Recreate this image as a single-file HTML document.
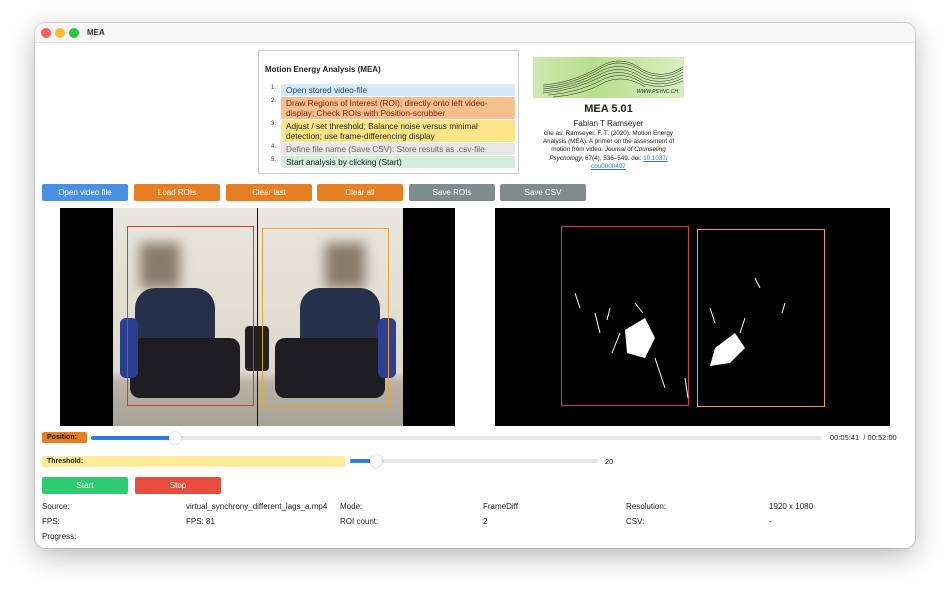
<!DOCTYPE html>
<html><head><meta charset="utf-8"><style>
*{margin:0;padding:0;box-sizing:border-box}
body{width:950px;height:594px;background:#fff;font-family:"Liberation Sans",sans-serif;position:relative;overflow:hidden}
.win{position:absolute;left:35px;top:23px;width:880px;height:525px;background:#fff;border-radius:10px;box-shadow:0 8px 28px rgba(0,0,0,.28),0 0 0 1px rgba(0,0,0,.12);overflow:hidden}
.tb{height:20px;background:#f6f6f6;border-bottom:1px solid #e2e2e2;position:relative}
.dot{position:absolute;top:5px;width:10px;height:10px;border-radius:50%}
.ab{position:absolute}
.btn{position:absolute;height:17px;color:#fff;font-size:8px;text-align:center;line-height:17px;border-radius:2px}
.t{position:absolute;font-size:8px;color:#222;white-space:nowrap}
.step{position:absolute;left:22px;width:234px;font-size:8.3px;padding:1px 5px;border-radius:2px;line-height:10px}
.num{position:absolute;left:12px;font-size:6px;color:#333}
</style></head><body>
<div class="win">
<div class="tb"><div class="dot" style="left:6px;background:#fe5f57"></div><div class="dot" style="left:20px;background:#febc2e"></div><div class="dot" style="left:34px;background:#28c840"></div><span style="position:absolute;left:52px;top:5px;font-size:8px;font-weight:bold;color:#333">MEA</span></div>

<div class="ab" style="left:223px;top:27px;width:261px;height:124px;border:1px solid #ccc;background:#fff">
<div class="t" style="left:6px;top:14px;font-weight:bold;font-size:8px">Motion Energy Analysis (MEA)</div>
<div class="num" style="top:34px">1.</div><div class="step" style="top:33px;background:#d6e9f8;color:#134a85">Open stored video-file</div>
<div class="num" style="top:47px">2.</div><div class="step" style="top:46px;background:#f6c08e;color:#7a2008">Draw Regions of Interest (ROI); directly onto left video-display; Check ROIs with Position-scrubber</div>
<div class="num" style="top:70px">3.</div><div class="step" style="top:69px;background:#fde68a;color:#222">Adjust / set threshold; Balance noise versus minimal detection; use frame-differencing display</div>
<div class="num" style="top:93px">4.</div><div class="step" style="top:92px;background:#e8e8e8;color:#666">Define file name (Save CSV): Store results as .csv-file</div>
<div class="num" style="top:106px">5.</div><div class="step" style="top:105px;background:#d3eedc;color:#111">Start analysis by clicking (Start)</div>
</div>

<div class="ab" style="left:498px;top:34px;width:151px;height:41px;background:linear-gradient(90deg,#cfe8b0,#b6de8c 40%,#d9efc0);overflow:hidden">
<svg width="151" height="41" style="position:absolute;left:0;top:0"><g fill="none" stroke="#222" stroke-width=".5">
<path d="M10 28 Q40 26 70 8 Q90 -2 110 13 Q130 23 150 10"/><path d="M10 30 Q40 28 70 10 Q90 0 110 15 Q130 25 150 12"/><path d="M10 32 Q40 30 70 13 Q90 4 110 18 Q130 27 150 15"/><path d="M10 34 Q40 32 70 16 Q90 7 110 21 Q130 29 150 18"/><path d="M10 36 Q40 34 70 19 Q90 10 110 24 Q130 31 150 21"/><path d="M15 38 Q45 36 71 22 Q91 13 111 27 Q130 33 150 24"/><path d="M20 40 Q50 38 72 25 Q92 17 112 30"/></g></svg>
<div style="position:absolute;right:6px;bottom:3px;font-size:5px;font-style:italic;color:#222">WWW.PSYNC.CH</div></div>
<div class="t" style="left:498px;top:80px;width:151px;text-align:center;font-weight:bold;font-size:11px">MEA 5.01</div>
<div class="t" style="left:498px;top:96px;width:151px;text-align:center;font-size:8px">Fabian T Ramseyer</div>
<div class="ab" style="left:499px;top:107px;width:149px;text-align:center;font-size:6.3px;line-height:8.2px;color:#222">cite as: Ramseyer, F. T. (2020). Motion Energy Analysis (MEA). A primer on the assessment of motion from video. <i>Journal of Counseling Psychology</i>, 67(4), 536–549. doi: <span style="color:#2a6fd6;text-decoration:underline">10.1037/ cou0000407</span></div>

<div class="btn" style="left:7px;top:161px;width:86px;background:#4a90e2">Open video file</div>
<div class="btn" style="left:99px;top:161px;width:86px;background:#e67e22">Load ROIs</div>
<div class="btn" style="left:191px;top:161px;width:86px;background:#e67e22">Clear last</div>
<div class="btn" style="left:282px;top:161px;width:86px;background:#e67e22">Clear all</div>
<div class="btn" style="left:374px;top:161px;width:86px;background:#7f8c8d">Save ROIs</div>
<div class="btn" style="left:465px;top:161px;width:86px;background:#7f8c8d">Save CSV</div>

<div class="ab" style="left:25px;top:185px;width:395px;height:218px;background:#000;overflow:hidden">
<div class="ab" style="left:53px;top:0;width:290px;height:218px;background:linear-gradient(180deg,#e9e6df,#ddd8cc 75%,#b9b2a5 80%,#a9a296)"></div>
<div class="ab" style="left:197px;top:0;width:1px;height:218px;background:#111"></div>
<div class="ab" style="left:185px;top:118px;width:24px;height:45px;background:#222;border-radius:4px"></div>
<div class="ab" style="left:80px;top:35px;width:40px;height:45px;background:#8a7a6a;filter:blur(6px)"></div>
<div class="ab" style="left:265px;top:35px;width:40px;height:45px;background:#8a7a6a;filter:blur(6px)"></div>
<div class="ab" style="left:75px;top:80px;width:80px;height:70px;background:#27304a;border-radius:20px 20px 8px 8px"></div>
<div class="ab" style="left:240px;top:80px;width:80px;height:70px;background:#27304a;border-radius:20px 20px 8px 8px"></div>
<div class="ab" style="left:70px;top:130px;width:110px;height:60px;background:#1d1d22;border-radius:10px"></div>
<div class="ab" style="left:215px;top:130px;width:110px;height:60px;background:#1d1d22;border-radius:10px"></div>
<div class="ab" style="left:60px;top:110px;width:18px;height:60px;background:#2d3f8f;border-radius:6px"></div>
<div class="ab" style="left:318px;top:110px;width:18px;height:60px;background:#2d3f8f;border-radius:6px"></div>
<div class="ab" style="left:67px;top:18px;width:127px;height:180px;border:1.5px solid #d9383a"></div>
<div class="ab" style="left:202px;top:20px;width:127px;height:179px;border:1.5px solid #e8a33a"></div>
</div>

<div class="ab" style="left:460px;top:185px;width:395px;height:218px;background:#000">
<div class="ab" style="left:66px;top:18px;width:128px;height:180px;border:1.5px solid #d9383a"></div>
<div class="ab" style="left:202px;top:21px;width:128px;height:178px;border:1.5px solid #e8a33a"></div>
<svg width="395" height="218" style="position:absolute;left:0;top:0"><g fill="#fff">
<path d="M130 122 L150 110 L160 130 L150 150 L132 145 Z"/><path d="M220 140 L240 125 L250 140 L235 155 L215 158 Z"/>
</g><g stroke="#fff" stroke-width="1" fill="none"><path d="M80 85 l5 15 M100 105 l5 20 M115 100 l-3 12 M160 150 l10 30 M190 170 l3 20 M260 70 l5 10 M290 95 l-3 10 M250 110 l-5 15 M215 100 l5 15 M140 95 l8 10 M125 125 l-8 20"/></g></svg>
</div>

<div class="ab" style="left:7px;top:409px;width:45px;height:11px;background:#e67e22;border-radius:2px;font-size:7px;font-weight:bold;line-height:11px;padding-left:5px;color:#222">Position:</div>
<div class="ab" style="left:56px;top:413px;width:731px;height:4px;background:#e6e6e6;border-radius:2px"></div>
<div class="ab" style="left:56px;top:413px;width:82px;height:4px;background:#2f7be0;border-radius:2px"></div>
<div class="ab" style="left:134px;top:409px;width:12px;height:12px;background:#fff;border-radius:50%;box-shadow:0 0 2px rgba(0,0,0,.3)"></div>
<div class="t" style="left:795px;top:410px;font-size:7.5px">00:05:41 &nbsp;/ 00:52:00</div>

<div class="ab" style="left:7px;top:433px;width:303px;height:11px;background:#fdeb9a;border-radius:2px;font-size:7px;font-weight:bold;line-height:11px;padding-left:5px;color:#222">Threshold:</div>
<div class="ab" style="left:315px;top:436px;width:248px;height:4px;background:#e6e6e6;border-radius:2px"></div>
<div class="ab" style="left:315px;top:436px;width:25px;height:4px;background:#2f7be0;border-radius:2px"></div>
<div class="ab" style="left:335px;top:432px;width:12px;height:12px;background:#fff;border-radius:50%;box-shadow:0 0 2px rgba(0,0,0,.3)"></div>
<div class="t" style="left:570px;top:434px;font-size:7.5px">20</div>

<div class="btn" style="left:7px;top:454px;width:86px;background:#2ecc71">Start</div>
<div class="btn" style="left:100px;top:454px;width:86px;background:#e74c3c">Stop</div>

<div class="t" style="left:7px;top:479px">Source:</div><div class="t" style="left:151px;top:479px">virtual_synchrony_different_lags_a.mp4</div><div class="t" style="left:305px;top:479px">Mode:</div><div class="t" style="left:448px;top:479px">FrameDiff</div><div class="t" style="left:591px;top:479px">Resolution:</div><div class="t" style="left:734px;top:479px">1920 x 1080</div>
<div class="t" style="left:7px;top:494px">FPS:</div><div class="t" style="left:151px;top:494px">FPS: 81</div><div class="t" style="left:305px;top:494px">ROI count:</div><div class="t" style="left:448px;top:494px">2</div><div class="t" style="left:591px;top:494px">CSV:</div><div class="t" style="left:734px;top:494px">-</div>
<div class="t" style="left:7px;top:509px">Progress:</div>
</div>
</body></html>
